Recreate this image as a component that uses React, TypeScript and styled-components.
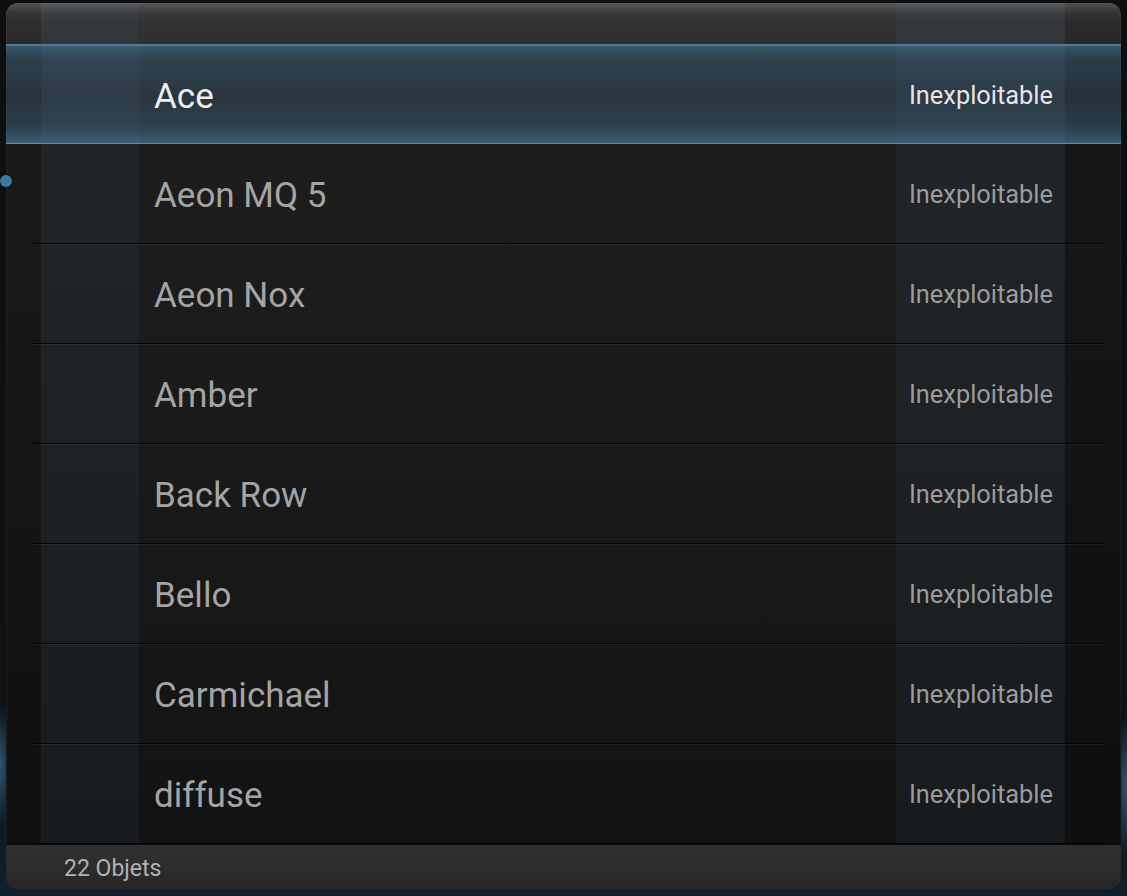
import React from "react";
import styled, { createGlobalStyle } from "styled-components";

const GlobalStyle = createGlobalStyle`
  html, body {
    margin: 0;
    padding: 0;
    width: 1127px;
    height: 896px;
    overflow: hidden;
    background:
      radial-gradient(ellipse 14px 60px at 0px 765px, rgba(70,140,190,0.55), rgba(70,140,190,0) 100%),
      radial-gradient(ellipse 14px 70px at 1127px 785px, rgba(70,140,190,0.55), rgba(70,140,190,0) 100%),
      linear-gradient(to bottom, #0d0f11 0%, #0e1216 80%, #10202c 100%);
    font-family: Roboto, "Open Sans", sans-serif;
  }
  #root { height: 896px; }
`;

const Stage = styled.div`
  box-sizing: border-box;
  height: 896px;
  padding: 3px 6px 7px 6px;
  display: flex;
`;

const Panel = styled.div`
  position: relative;
  flex: 1;
  display: flex;
  flex-direction: column;
  border-radius: 12px;
  overflow: hidden;
  box-shadow: inset 1px 0 0 rgba(255,255,255,0.06), inset -1px 0 0 rgba(255,255,255,0.04);
  background:
    linear-gradient(to right,
      rgba(0,0,0,0.18) 0px, rgba(0,0,0,0.18) 35px,
      rgba(60,85,110,0.13) 35px, rgba(60,85,110,0.13) 133px,
      rgba(0,0,0,0) 133px, rgba(0,0,0,0) 890px,
      rgba(60,85,110,0.13) 890px, rgba(60,85,110,0.13) 1059px,
      rgba(0,0,0,0.25) 1059px, rgba(0,0,0,0.25) 100%),
    linear-gradient(to bottom, #1f1f1f 0%, #1b1b1b 40%, #121212 100%);
`;

const Header = styled.div`
  height: 41px;
  flex: none;
  background: linear-gradient(to bottom,
    rgba(255,255,255,0.26) 0px,
    rgba(255,255,255,0.14) 8px,
    rgba(255,255,255,0.09) 16px,
    rgba(255,255,255,0.07) 100%);
`;

const List = styled.div`
  display: flex;
  flex-direction: column;
`;

const Row = styled.div<{ $selected?: boolean }>`
  box-sizing: border-box;
  height: 100px;
  display: flex;
  flex-direction: column;
  ${(p) =>
    p.$selected
      ? `
    border-top: 2px solid #4a7c9a;
    border-bottom: 1px solid #5b8dac;
    background: linear-gradient(to bottom,
      rgba(85,135,170,0.55) 0px,
      rgba(70,110,140,0.45) 12px,
      rgba(60,95,120,0.36) 50px,
      rgba(65,105,135,0.45) 80px,
      rgba(80,130,165,0.62) 100%);
  `
      : ""}
`;

const RowBody = styled.div`
  flex: 1;
  display: flex;
  align-items: center;
  justify-content: space-between;
  padding: 3px 68px 0 148px;
`;

const Name = styled.span<{ $selected?: boolean }>`
  font-size: 35px;
  color: ${(p) => (p.$selected ? "#eeeeee" : "#a4a4a4")};
`;

const Status = styled.span<{ $selected?: boolean }>`
  font-size: 25.4px;
  padding-bottom: 2px;
  color: ${(p) => (p.$selected ? "#e6e6e6" : "#9c9c9c")};
`;

const Divider = styled.div`
  height: 1px;
  margin: 0 17px 0 26px;
  background: #030303;
  box-shadow: 0 1px 0 rgba(255,255,255,0.05);
`;

const Footer = styled.div`
  flex: 1;
  display: flex;
  align-items: center;
  padding: 3px 0 0 58px;
  background: linear-gradient(to bottom,
    #2f2f2f 0px, #313131 4px, #2b2b2b 60%, #262626 100%);
  border-top: 1px solid #0a0a0a;
`;

const Count = styled.span`
  font-size: 23px;
  color: #b2b2b2;
`;

const Marker = styled.div`
  position: absolute;
  left: 0;
  top: 175px;
  width: 12px;
  height: 12px;
  border-radius: 50%;
  background: #3d789c;
  box-shadow: 0 0 2px rgba(0,0,0,0.6);
`;

const items = [
  "Ace",
  "Aeon MQ 5",
  "Aeon Nox",
  "Amber",
  "Back Row",
  "Bello",
  "Carmichael",
  "diffuse",
];

export default function App() {
  return (
    <>
      <GlobalStyle />
      <Stage>
        <Panel>
          <Header />
          <List>
            {items.map((name, i) => {
              const sel = i === 0;
              return (
                <Row key={name} $selected={sel}>
                  <RowBody>
                    <Name $selected={sel}>{name}</Name>
                    <Status $selected={sel}>Inexploitable</Status>
                  </RowBody>
                  {!sel && <Divider />}
                </Row>
              );
            })}
          </List>
          <Footer>
            <Count>22 Objets</Count>
          </Footer>
        </Panel>
        <Marker />
      </Stage>
    </>
  );
}
